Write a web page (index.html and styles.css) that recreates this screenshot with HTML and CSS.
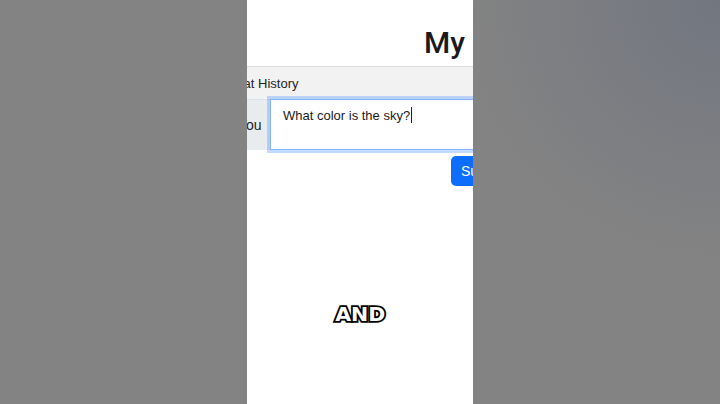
FILE: index.html
```html
<!DOCTYPE html>
<html lang="en">
<head>
<meta charset="utf-8">
<title>My ChatGPT</title>
<link rel="stylesheet" href="styles.css">
</head>
<body>
<div class="stage">
  <div class="side side-left"></div>
  <main class="phone">
    <div class="page">
      <h1 class="title">My ChatGPT</h1>
      <div class="history">Chat History</div>
      <div class="input-group">
        <span class="input-label">You</span>
        <div class="input-box">What color is the sky?<span class="caret"></span></div>
      </div>
      <div class="actions">
        <button class="btn-submit" type="button">Submit</button>
      </div>
    </div>
    <div class="caption"><span class="caption-text">AND</span></div>
  </main>
  <div class="side side-right"></div>
</div>
</body>
</html>
```

FILE: styles.css
```css
* { box-sizing: border-box; }
html, body { margin: 0; padding: 0; }
body {
  width: 720px;
  height: 404px;
  overflow: hidden;
  background: #838383;
  font-family: "Liberation Sans", Arial, sans-serif;
}
.stage {
  display: flex;
  width: 720px;
  height: 404px;
}
.side {
  flex: 0 0 247px;
  background: #838383;
}
.side-right {
  background:
    radial-gradient(ellipse 260px 260px at 100% 0%, rgba(114,118,128,1) 0%, rgba(114,118,128,0.55) 45%, rgba(131,131,131,0) 100%),
    #838383;
}
.phone {
  position: relative;
  flex: 0 0 226px;
  background: #ffffff;
  overflow: hidden;
}
.page {
  width: 520px;
  margin-left: -20px;
  padding-top: 25px;
  color: #212529;
}
.title {
  margin: 0 0 5px 0;
  padding-left: 197px;
  font-family: Roboto, "Liberation Sans", sans-serif;
  font-size: 30px;
  line-height: 36px;
  font-weight: 500;
  word-spacing: 2px;
  white-space: nowrap;
  color: #1a1a1a;
}
.history {
  height: 33px;
  display: flex;
  align-items: center;
  border-top: 1px solid #dcdcdc;
  background: #f2f2f2;
  padding-left: 0;
  font-size: 13px;
  color: #222;
}
.input-group {
  display: flex;
  height: 51px;
}
.input-label {
  flex: 0 0 43px;
  display: flex;
  align-items: center;
  padding-left: 11px;
  background: #e9ecef;
  font-size: 14px;
  color: #222;
  border-top: 1px solid #dee2e6;
}
.input-box {
  flex: 1;
  border: 1px solid #86b7fe;
  box-shadow: 0 0 0 3px rgba(13,110,253,0.25);
  background: #fff;
  padding: 6px 12px;
  font-size: 13px;
  line-height: 19px;
  color: #1a1a1a;
  white-space: nowrap;
}
.caret {
  display: inline-block;
  width: 1px;
  height: 16px;
  background: #222;
  vertical-align: -3px;
  margin-left: 1px;
}
.actions {
  display: flex;
  padding-left: 224px;
  margin-top: 6px;
}
.btn-submit {
  height: 30px;
  padding: 0 10px;
  border: none;
  border-radius: 5px;
  background: #0d6efd;
  color: #fff;
  font-family: "Liberation Sans", Arial, sans-serif;
  font-size: 14px;
}
.caption {
  position: absolute;
  top: 303px;
  left: 0;
  right: 0;
  text-align: center;
}
.caption-text {
  display: inline-block;
  transform: scaleX(1.08);
  font-family: "DejaVu Sans", sans-serif;
  font-weight: 700;
  font-size: 19px;
  line-height: 22px;
  letter-spacing: 0px;
  color: #fff;
  -webkit-text-stroke: 3.5px #000;
  paint-order: stroke fill;
}
```
